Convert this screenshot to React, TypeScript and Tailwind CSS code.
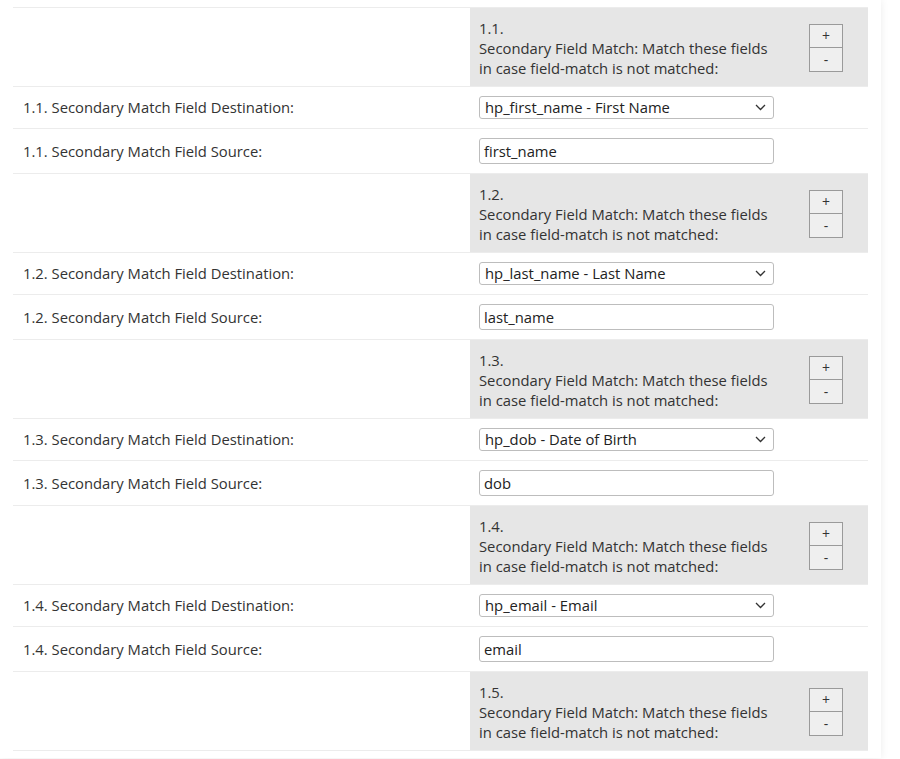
import React from "react";

const items = [
  { n: "1.1.", dest: "hp_first_name - First Name", src: "first_name" },
  { n: "1.2.", dest: "hp_last_name - Last Name", src: "last_name" },
  { n: "1.3.", dest: "hp_dob - Date of Birth", src: "dob" },
  { n: "1.4.", dest: "hp_email - Email", src: "email" },
];

function Header({ n }: { n: string }) {
  return (
    <div className="grid grid-cols-[457px_398px] border-t border-[#ececec]">
      <div />
      <div className="bg-[#e6e6e6] h-[78px] pl-[9px] pr-[25px] pt-[10px] flex justify-between">
        <div className="leading-[20px] text-[14.8px] text-[#333]">
          <div>{n}</div>
          <div>Secondary Field Match: Match these fields</div>
          <div>in case field-match is not matched:</div>
        </div>
        <div className="mt-[6px] flex flex-col w-[34px]">
          <button className="h-[24px] border border-[#9a9a9a] bg-[#efefef] text-[14px] leading-none text-[#333]">+</button>
          <button className="h-[24px] border border-t-0 border-[#9a9a9a] bg-[#efefef] text-[14px] leading-none text-[#333]">-</button>
        </div>
      </div>
    </div>
  );
}

function DestRow({ n, value }: { n: string; value: string }) {
  return (
    <div className="grid grid-cols-[457px_398px] border-t border-[#ececec] h-[42px] items-center">
      <div className="pl-[10px] text-[14.8px] text-[#333]">{n} Secondary Match Field Destination:</div>
      <div className="pl-[9px]">
        <div className="relative w-[295px] h-[23px] border border-[#bdbdbd] rounded-[3px] bg-white flex items-center pl-[5px] text-[14.8px] text-[#222]">
          {value}
          <svg className="absolute right-[7px] top-[7px]" width="11" height="7" viewBox="0 0 11 7" fill="none">
            <path d="M1 1l4.5 4.5L10 1" stroke="#333" strokeWidth="1.3" />
          </svg>
        </div>
      </div>
    </div>
  );
}

function SrcRow({ n, value }: { n: string; value: string }) {
  return (
    <div className="grid grid-cols-[457px_398px] border-t border-[#ececec] h-[45px] items-center">
      <div className="pl-[10px] text-[14.8px] text-[#333]">{n} Secondary Match Field Source:</div>
      <div className="pl-[9px]">
        <div className="w-[295px] h-[26px] border border-[#bdbdbd] rounded-[3px] bg-white flex items-center pl-[4px] text-[14.8px] text-[#222]">
          {value}
        </div>
      </div>
    </div>
  );
}

export default function App() {
  return (
    <div className="w-[900px] h-[759px] overflow-hidden bg-white" style={{ fontFamily: '"Open Sans", "Noto Sans", sans-serif' }}>
      <div className="w-[881px] shadow-[0_0_8px_rgba(0,0,0,0.08)] px-[13px] pt-[7px] bg-white">
        {items.map((it) => (
          <React.Fragment key={it.n}>
            <Header n={it.n} />
            <DestRow n={it.n} value={it.dest} />
            <SrcRow n={it.n} value={it.src} />
          </React.Fragment>
        ))}
        <Header n="1.5." />
        <div className="border-t border-[#ececec] h-[8px]" />
      </div>
    </div>
  );
}
